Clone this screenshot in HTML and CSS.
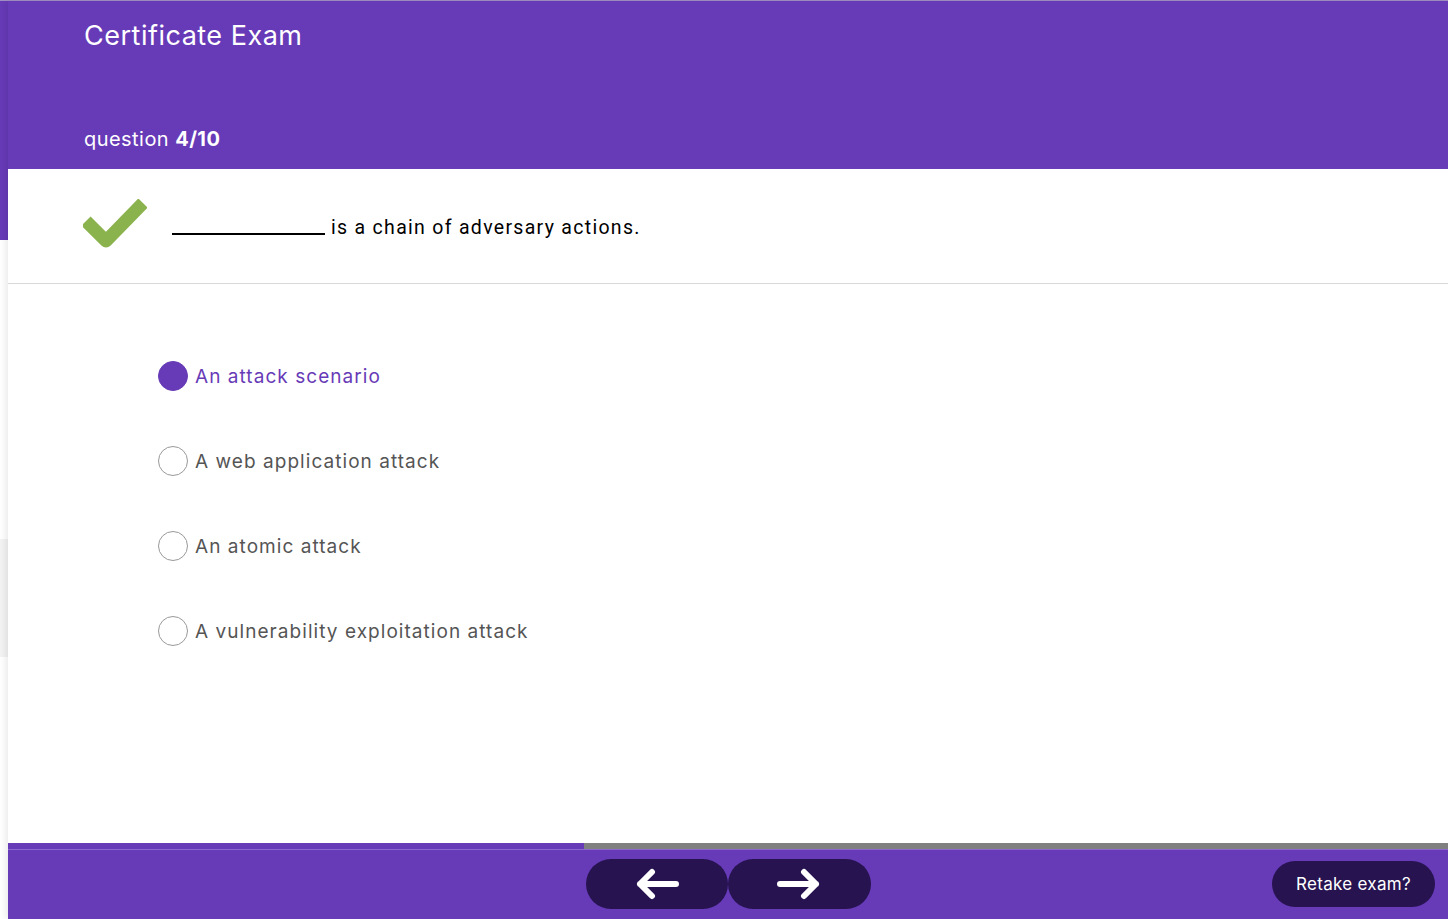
FILE: index.html
```html
<!DOCTYPE html>
<html lang="en">
<head>
<meta charset="utf-8">
<title>Certificate Exam</title>
<link rel="stylesheet" href="styles.css">
</head>
<body>
<div class="page">
  <div class="rail">
    <div class="rail-top"></div>
    <div class="rail-gap"></div>
    <div class="rail-gray"></div>
  </div>
  <div class="main">
    <header class="header">
      <h1 class="title">Certificate Exam</h1>
      <div class="counter">question <b>4/10</b></div>
    </header>
    <section class="question">
      <svg class="check" width="64" height="50" viewBox="0 0 64 50">
        <polyline points="3,22 23,42 60,4" fill="none" stroke="#8ab24d" stroke-width="13" stroke-linecap="butt" stroke-linejoin="round"/>
      </svg>
      <span class="blank"></span>
      <span class="qtext">is a chain of adversary actions.</span>
    </section>
    <section class="options">
      <label class="option selected"><span class="radio"></span><span class="label">An attack scenario</span></label>
      <label class="option"><span class="radio"></span><span class="label">A web application attack</span></label>
      <label class="option"><span class="radio"></span><span class="label">An atomic attack</span></label>
      <label class="option"><span class="radio"></span><span class="label">A vulnerability exploitation attack</span></label>
    </section>
    <footer class="footer">
      <div class="progress"><div class="progress-fill" style="width:40%"></div></div>
      <div class="footer-bar">
        <div class="nav">
          <button class="navbtn" aria-label="Previous">
            <svg width="46" height="32" viewBox="0 0 46 32"><path d="M42 16H6M18 4L6 16l12 12" fill="none" stroke="#fff" stroke-width="6" stroke-linecap="round" stroke-linejoin="round"/></svg>
          </button>
          <button class="navbtn" aria-label="Next">
            <svg width="46" height="32" viewBox="0 0 46 32"><path d="M4 16h36M28 4l12 12-12 12" fill="none" stroke="#fff" stroke-width="6" stroke-linecap="round" stroke-linejoin="round"/></svg>
          </button>
        </div>
        <button class="retake">Retake exam?</button>
      </div>
    </footer>
  </div>
</div>
</body>
</html>
```
FILE: styles.css
```css
* { box-sizing: border-box; }
html, body { margin: 0; padding: 0; }
body {
  background: #fff;
  font-family: Inter, "Noto Sans", sans-serif;
  overflow: hidden;
}
.page {
  display: flex;
  height: 919px;
  border-top: 1px solid #a08fc2;
}
.rail {
  width: 8px;
  flex: none;
  display: flex;
  flex-direction: column;
}
.rail-top { height: 239px; background: #673ab7; }
.rail-gap { height: 299px; background: #fff; }
.rail-gray { height: 118px; background: #f3f3f3; }
.main {
  flex: 1;
  display: flex;
  flex-direction: column;
  box-shadow: -3px 0 6px rgba(0,0,0,0.08);
  position: relative;
  z-index: 1;
  background: #fff;
}
.header {
  height: 168px;
  background: #673ab7;
  color: #fff;
  padding: 17px 0 0 76px;
  display: flex;
  flex-direction: column;
}
.title {
  margin: 0;
  font-weight: 400;
  font-size: 27px;
  line-height: 36px;
  letter-spacing: 0.5px;
}
.counter {
  margin-top: 72px;
  font-size: 20px;
  line-height: 26px;
  letter-spacing: 0.45px;
}
.counter b { font-weight: 700; }
.question {
  height: 115px;
  border-bottom: 1px solid #d9d9d9;
  display: flex;
  align-items: center;
  padding-left: 75px;
  padding-bottom: 1px;
}
.check { flex: none; margin-top: -4px; }
.blank {
  width: 153px;
  height: 2px;
  background: #000;
  margin-left: 25px;
  margin-top: 16px;
}
.qtext {
  margin-left: 6px;
  font-family: Roboto, "Liberation Sans", sans-serif;
  font-size: 19.5px;
  letter-spacing: 1.3px;
  color: #000;
  margin-top: 3px;
}
.options {
  flex: 1;
  display: flex;
  flex-direction: column;
  padding: 77px 0 0 150px;
  gap: 55px;
}
.option {
  display: flex;
  align-items: center;
  height: 30px;
  cursor: pointer;
}
.radio {
  width: 30px;
  height: 30px;
  border-radius: 50%;
  border: 1.5px solid #999;
  flex: none;
  background: #fff;
}
.label {
  margin-left: 7px;
  font-size: 19px;
  color: #555;
  letter-spacing: 1.05px;
}
.option.selected .radio { background: #673ab7; border-color: #673ab7; }
.option.selected .label { color: #673ab7; }
.footer {
  height: 76px;
  display: flex;
  flex-direction: column;
  background: #673ab7;
}
.progress {
  height: 6px;
  background: #808080;
  flex: none;
}
.progress-fill {
  height: 100%;
  background: #673ab7;
}
.footer-bar {
  flex: 1;
  border-top: 1px solid #8c66d1;
  position: relative;
  display: flex;
  justify-content: center;
  padding-top: 9px;
}
.nav { display: flex; height: 50px; }
.navbtn {
  width: 142.5px;
  height: 50px;
  border: none;
  border-radius: 25px;
  background: #261350;
  display: flex;
  align-items: center;
  justify-content: center;
  padding: 0;
  cursor: pointer;
}
.retake {
  position: absolute;
  right: 13px;
  top: 11px;
  width: 163px;
  height: 46px;
  border: none;
  border-radius: 23px;
  background: #261350;
  color: #fff;
  font-family: Inter, "Noto Sans", sans-serif;
  font-size: 17px;
  letter-spacing: 0.3px;
  padding: 0;
  cursor: pointer;
}
```
